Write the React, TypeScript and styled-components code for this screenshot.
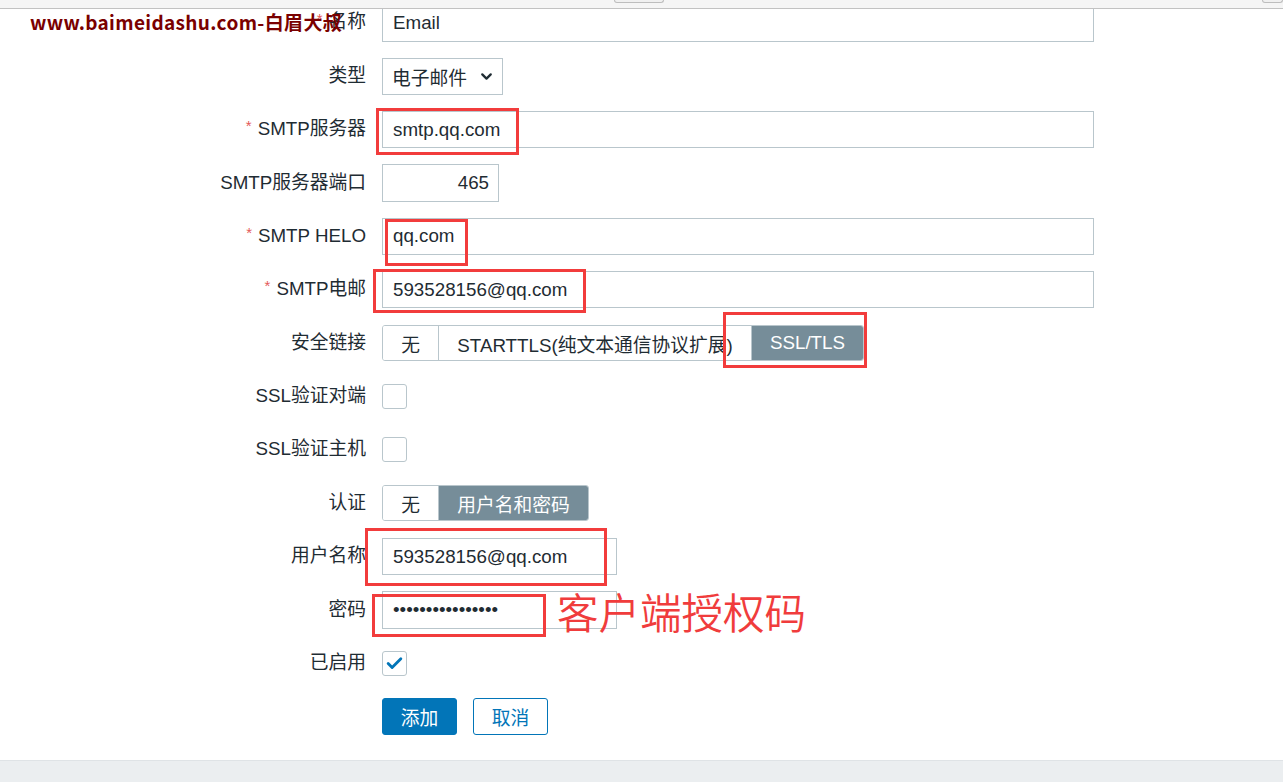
import React from "react";
import styled, { createGlobalStyle } from "styled-components";
import { ChevronDown, Check } from "lucide-react";

const FONT = `"Liberation Sans", Arial, "Noto Sans CJK SC", sans-serif`;

const Global = createGlobalStyle`
  html, body { margin: 0; padding: 0; background: #ffffff; }
  body { font-family: ${FONT}; color: #1f2c33; }
  * { box-sizing: border-box; }
`;

const Page = styled.div`
  position: relative;
  width: 1283px;
  height: 782px;
  overflow: hidden;
  display: flex;
  flex-direction: column;
  background: #ffffff;
`;

const TopStrip = styled.div`
  position: relative;
  z-index: 2;
  height: 9px;
  flex: none;
  background: #f5f5f5;
  border-bottom: 1px solid #c2c2c2;
  display: flex;
  align-items: flex-start;
`;

const StripHandle = styled.div<{ $left: number; $width: number }>`
  margin-left: ${(p) => p.$left}px;
  width: ${(p) => p.$width}px;
  height: 3px;
  background: #f0f0f0;
  border: 1px solid #bdbdbd;
  border-top: none;
  border-radius: 0 0 3px 3px;
`;

const Form = styled.div`
  margin-top: -5px;
  display: grid;
  grid-template-columns: 366px 1fr;
  column-gap: 16px;
  row-gap: 15.88px;
  grid-auto-rows: 37.5px;
  align-items: center;
  font-size: 18.75px;
`;

const Label = styled.div`
  text-align: right;
  white-space: nowrap;
  color: #1f2c33;
  line-height: 1;
`;

const Req = styled.span`
  color: #e45959;
  font-size: 15px;
  position: relative;
  top: -4px;
  margin-right: 6px;
`;

const Field = styled.div`
  display: flex;
  align-items: center;
  height: 100%;
`;

const TextInput = styled.input<{ $w: number; $right?: boolean }>`
  width: ${(p) => p.$w}px;
  height: 37.5px;
  border: 1px solid #b9c6cc;
  border-radius: 0;
  background: #ffffff;
  font-family: ${FONT};
  font-size: 18.75px;
  color: #1f2c33;
  padding: 0 ${(p) => (p.$right ? 9 : 0)}px 0 ${(p) => (p.$right ? 0 : 10)}px;
  text-align: ${(p) => (p.$right ? "right" : "left")};
  outline: none;
`;

const SelectBox = styled.div`
  width: 121px;
  height: 37px;
  border: 1px solid #b9c6cc;
  background: #ffffff;
  display: flex;
  align-items: center;
  justify-content: space-between;
  padding: 0 7px 0 9px;
  color: #1f2c33;
`;

const Segmented = styled.div`
  display: flex;
  height: 36px;
  border: 1px solid #b9c6cc;
  border-radius: 3px;
  overflow: hidden;
`;

const Segment = styled.div<{ $active?: boolean; $w: number }>`
  width: ${(p) => p.$w}px;
  display: flex;
  align-items: center;
  justify-content: center;
  white-space: nowrap;
  background: ${(p) => (p.$active ? "#768d99" : "#ffffff")};
  color: ${(p) => (p.$active ? "#ffffff" : "#1f2c33")};
  & + & {
    border-left: 1px solid #b9c6cc;
  }
`;

const CheckBox = styled.div`
  width: 25px;
  height: 25px;
  border: 1px solid #b9c6cc;
  border-radius: 3px;
  background: #ffffff;
  display: flex;
  align-items: center;
  justify-content: center;
  color: #0275b8;
`;

const ButtonRow = styled.div`
  display: flex;
  gap: 16px;
  height: 100%;
`;

const Button = styled.button<{ $primary?: boolean }>`
  width: 75px;
  height: 37.5px;
  border-radius: 3px;
  font-family: ${FONT};
  font-size: 18.75px;
  border: 1px solid #0275b8;
  background: ${(p) => (p.$primary ? "#0275b8" : "#ffffff")};
  color: ${(p) => (p.$primary ? "#ffffff" : "#0275b8")};
  padding: 0;
  cursor: pointer;
`;

const Footer = styled.div`
  margin-top: 24.6px;
  flex: 1;
  background: #ebeef0;
  border-top: 1px solid #dfe3e6;
`;

const Annotation = styled.div<{ $x: number; $y: number; $w: number; $h: number }>`
  position: absolute;
  left: ${(p) => p.$x}px;
  top: ${(p) => p.$y}px;
  width: ${(p) => p.$w}px;
  height: ${(p) => p.$h}px;
  border: 3px solid #f23c3c;
  pointer-events: none;
`;

const AnnotationText = styled.div`
  position: absolute;
  left: 557px;
  top: 587px;
  font-family: "Noto Sans CJK SC", sans-serif;
  font-weight: 350;
  font-size: 41.5px;
  line-height: 1.2;
  color: #f03c3c;
  white-space: nowrap;
`;

const Watermark = styled.div`
  position: absolute;
  z-index: 3;
  left: 30px;
  top: 9px;
  font-family: "Noto Sans CJK SC", sans-serif;
  font-weight: 700;
  font-size: 19px;
  letter-spacing: 0.35px;
  line-height: 1.4;
  color: #7a0000;
  white-space: nowrap;
`;

const req = (t: string) => (
  <Label>
    <Req>*</Req>
    {t}
  </Label>
);

export default function App() {
  return (
    <>
      <Global />
      <Page>
        <TopStrip>
          <StripHandle $left={614} $width={50} />
          <StripHandle $left={598} $width={21} />
        </TopStrip>
        <Form>
          {req("名称")}
          <Field>
            <TextInput $w={712} defaultValue="Email" />
          </Field>

          <Label>类型</Label>
          <Field>
            <SelectBox>
              <span>电子邮件</span>
              <ChevronDown size={17} strokeWidth={3.2} color="#1f2c33" />
            </SelectBox>
          </Field>

          {req("SMTP服务器")}
          <Field>
            <TextInput $w={712} defaultValue="smtp.qq.com" />
          </Field>

          <Label>SMTP服务器端口</Label>
          <Field>
            <TextInput $w={117} $right defaultValue="465" />
          </Field>

          {req("SMTP HELO")}
          <Field>
            <TextInput $w={712} defaultValue="qq.com" />
          </Field>

          {req("SMTP电邮")}
          <Field>
            <TextInput $w={712} defaultValue="593528156@qq.com" />
          </Field>

          <Label>安全链接</Label>
          <Field>
            <Segmented>
              <Segment $w={55}>无</Segment>
              <Segment $w={313}>STARTTLS(纯文本通信协议扩展)</Segment>
              <Segment $w={112} $active>SSL/TLS</Segment>
            </Segmented>
          </Field>

          <Label>SSL验证对端</Label>
          <Field>
            <CheckBox />
          </Field>

          <Label>SSL验证主机</Label>
          <Field>
            <CheckBox />
          </Field>

          <Label>认证</Label>
          <Field>
            <Segmented>
              <Segment $w={55}>无</Segment>
              <Segment $w={150} $active>用户名和密码</Segment>
            </Segmented>
          </Field>

          <Label>用户名称</Label>
          <Field>
            <TextInput $w={235} defaultValue="593528156@qq.com" />
          </Field>

          <Label>密码</Label>
          <Field>
            <TextInput $w={235} type="password" defaultValue="abcdefghijklmnop" />
          </Field>

          <Label>已启用</Label>
          <Field>
            <CheckBox>
              <Check size={19} strokeWidth={3.6} />
            </CheckBox>
          </Field>

          <div />
          <ButtonRow>
            <Button $primary>添加</Button>
            <Button>取消</Button>
          </ButtonRow>
        </Form>
        <Footer />

        <Annotation $x={376} $y={108} $w={143} $h={47} />
        <Annotation $x={385} $y={219} $w={83} $h={47} />
        <Annotation $x={373} $y={269} $w={213} $h={44} />
        <Annotation $x={723} $y={312} $w={144} $h={56} />
        <Annotation $x={365} $y={528} $w={242} $h={58} />
        <Annotation $x={372} $y={594} $w={174} $h={43} />
        <AnnotationText>客户端授权码</AnnotationText>
        <Watermark>www.baimeidashu.com-白眉大叔</Watermark>
      </Page>
    </>
  );
}
